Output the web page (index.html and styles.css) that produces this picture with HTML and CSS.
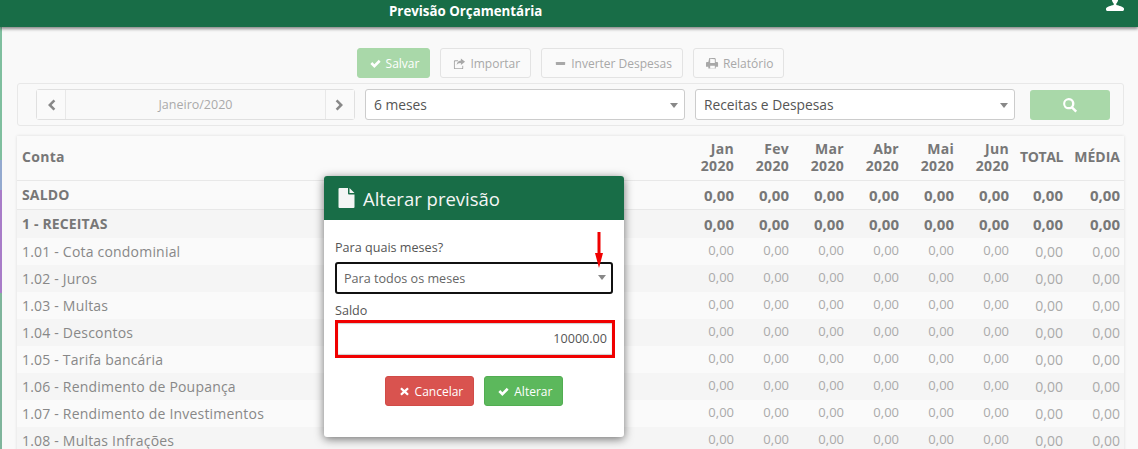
FILE: index.html
```html
<!DOCTYPE html>
<html lang="pt-BR">

<head>
    <meta charset="UTF-8">
    <title>Previsão Orçamentária</title>
    <link rel="stylesheet" href="styles.css">
</head>

<body>
    <div class="topbar">
        <span class="topbar-title">Previsão Orçamentária</span>
        <svg class="topbar-user" viewBox="0 0 20 14" width="20" height="14"><path d="M6.500 0h7c0 3-1 5.500-2.200 6.500v1.500c3 .8 6.700 1.500 7.700 3.500v1c0 .8-.7 1.500-1.500 1.500h-15c-.8 0-1.500-.7-1.500-1.500v-1c1-2 4.700-2.700 7.700-3.500v-1.500c-1.200-1-2.200-3.500-2.200-6.500z" fill="#fff"/></svg>
    </div>

    <div class="page">
        <div class="side-strip">
            <div class="strip-green"></div>
            <div class="strip-blue"></div>
            <div class="strip-purple"></div>
            <div class="strip-green2"></div>
        </div>

        <div class="content">
            <div class="actions">
                <button class="btn btn-save">
                    <svg class="ico" viewBox="0 0 14 14"><path d="M1.500 7.500l2-2 2.300 2.300 4.700-4.800 2 2-6.700 6.800z" fill="currentColor"/></svg>
                    Salvar
                </button>
                <button class="btn">
                    <svg class="ico" viewBox="0 0 14 14"><path d="M8.500 1.500l4.500 3.500-4.500 3.500v-2c-2.500 0-4 .7-4.500 2.500 0-3 1.500-5 4.500-5.300zM2.500 3.500h3v1h-3a.5.5 0 0 0-.5.5v6.500a.5.5 0 0 0 .5.5h7a.5.5 0 0 0 .5-.5v-2h1v2.500a1 1 0 0 1-1 1h-8a1 1 0 0 1-1-1v-7.500a1 1 0 0 1 1-1z" fill="currentColor"/></svg>
                    Importar
                </button>
                <button class="btn">
                    <svg class="ico" viewBox="0 0 14 14"><rect x="2" y="5.500" width="10" height="3" rx=".5" fill="currentColor"/></svg>
                    Inverter Despesas
                </button>
                <button class="btn">
                    <svg class="ico" viewBox="0 0 14 14"><path d="M3.500 1h6l1 1v3.500h1.500a1 1 0 0 1 1 1v4h-2.500v2h-8v-2h-2.500v-4a1 1 0 0 1 1-1h1.500zM4.500 2v4.500h5v-4zM4.500 9.500v2.500h5v-2.500z" fill="currentColor" fill-rule="evenodd"/></svg>
                    Relatório
                </button>
            </div>

            <div class="filters">
                <div class="month-picker">
                    <button class="month-arrow">
                        <svg viewBox="0 0 10 14" width="10" height="14"><path d="M7.500 1.500l1.800 1.800-3.700 3.700 3.700 3.700-1.800 1.800-5.500-5.500z" fill="currentColor"/></svg>
                    </button>
                    <div class="month-value">Janeiro/2020</div>
                    <button class="month-arrow">
                        <svg viewBox="0 0 10 14" width="10" height="14"><path d="M2.500 1.500l-1.800 1.800 3.700 3.700-3.700 3.700 1.800 1.800 5.500-5.500z" fill="currentColor"/></svg>
                    </button>
                </div>
                <div class="select">6 meses<span class="caret"></span></div>
                <div class="select">Receitas e Despesas<span class="caret"></span></div>
                <button class="btn-search">
                    <svg viewBox="0 0 14 14" width="16" height="16"><path d="M5.800 0.800a5 5 0 0 1 4.100 7.900l3.300 3.300-1.500 1.500-3.300-3.300a5 5 0 1 1-2.600-9.400zM5.800 2.800a3 3 0 1 0 0 6 3 3 0 0 0 0-6z" fill="currentColor" fill-rule="evenodd"/></svg>
                </button>
            </div>

            <table class="grid">
                <colgroup>
                    <col>
                    <col class="col-m"><col class="col-m"><col class="col-m"><col class="col-m"><col class="col-m"><col class="col-m">
                    <col class="col-t"><col class="col-a">
                </colgroup>
                <thead>
                    <tr>
                        <th class="conta">Conta</th>
                        <th>Jan<br>2020</th>
                        <th>Fev<br>2020</th>
                        <th>Mar<br>2020</th>
                        <th>Abr<br>2020</th>
                        <th>Mai<br>2020</th>
                        <th>Jun<br>2020</th>
                        <th class="th-total">TOTAL</th>
                        <th class="th-media">MÉDIA</th>
                    </tr>
                </thead>
                <tbody id="rows"></tbody>
            </table>
        </div>
    </div>

    <div class="modal">
        <div class="modal-head">
            <svg viewBox="0 0 16 20" width="17" height="20"><path d="M1 0h8.500v5.500a1 1 0 0 0 1 1h5.500v12.500a1 1 0 0 1-1 1h-14a1 1 0 0 1-1-1v-18a1 1 0 0 1 1-1zM11 0l5 5h-5z" fill="#f4f6f5"/></svg>
            <span>Alterar previsão</span>
        </div>
        <div class="modal-body">
            <label class="field-label">Para quais meses?</label>
            <div class="modal-select">Para todos os meses<span class="caret"></span></div>
            <label class="field-label saldo-label">Saldo</label>
            <div class="modal-input">10000.00</div>
            <div class="modal-btns">
                <button class="btn-cancel">
                    <svg class="ico-x" viewBox="0 0 14 14"><path d="M3.500 1.800l3.500 3.200 3.500-3.200 2 2-3.300 3.200 3.300 3.200-2 2-3.500-3.200-3.500 3.200-2-2 3.300-3.200-3.300-3.200z" fill="currentColor"/></svg>
                    Cancelar
                </button>
                <button class="btn-ok">
                    <svg class="ico" viewBox="0 0 14 14"><path d="M1.500 7.500l2-2 2.300 2.300 4.700-4.800 2 2-6.700 6.800z" fill="currentColor"/></svg>
                    Alterar
                </button>
            </div>
        </div>
        <svg class="red-arrow" viewBox="0 0 8 36" width="8" height="36"><path d="M2.500 0h3v21h2.500l-4 15-4-15h2.500z" fill="#f00000"/></svg>
    </div>

    <script>
        // linhas da tabela
        let contas = [
            ['SALDO', 'total'],
            ['1 - RECEITAS', 'total'],
            ['1.01 - Cota condominial', ''],
            ['1.02 - Juros', ''],
            ['1.03 - Multas', ''],
            ['1.04 - Descontos', ''],
            ['1.05 - Tarifa bancária', ''],
            ['1.06 - Rendimento de Poupança', ''],
            ['1.07 - Rendimento de Investimentos', ''],
            ['1.08 - Multas Infrações', ''],
        ];

        let rows = document.querySelector('#rows');
        contas.forEach(conta => {
            let tds = '';
            for (let i = 0; i < 6; i++) {
                tds += '<td><span>0,00</span></td>';
            }
            tds += '<td class="sum"><span>0,00</span></td><td class="sum"><span>0,00</span></td>';
            rows.innerHTML += `<tr class="${conta[1]}"><td class="conta">${conta[0]}</td>${tds}</tr>`;
        });
    </script>
</body>

</html>
```

FILE: styles.css
```css
* {
    box-sizing: border-box;
}

html,
body {
    height: 100%;
}

body {
    margin: 0;
    overflow: hidden;
    background-color: #f9f9f9;
    font-family: "Open Sans", "Liberation Sans", sans-serif;
    font-size: 14px;
    color: #555;
}

button {
    font-family: inherit;
}

.topbar {
    height: 27px;
    background-color: #186d47;
    box-shadow: 0 2px 3px rgba(0, 0, 0, 0.45);
    display: flex;
    align-items: flex-start;
    justify-content: space-between;
    padding: 2px 13px 0 389px;
    position: relative;
}

.topbar-title {
    color: #fff;
    font-size: 13.300px;
    font-weight: 700;
}

.topbar-user {
    margin-top: -5px;
}

.page {
    display: flex;
    height: 422px;
}

.side-strip {
    width: 2px;
    flex-shrink: 0;
    display: flex;
    flex-direction: column;
}

.strip-green {
    height: 133px;
    background-color: #7fbf9f;
}

.strip-blue {
    height: 30px;
    background-color: #93a9cf;
}

.strip-purple {
    height: 103px;
    background-color: #a87cc8;
}

.strip-green2 {
    flex: 1;
    background-color: #7fb59c;
}

.content {
    flex: 1;
    padding: 21px 14px 0 15px;
}

.actions {
    display: flex;
    justify-content: center;
    gap: 10px;
    height: 30px;
}

.btn {
    height: 30px;
    padding: 0 10px 0 12px;
    border: 1px solid #e3e3e3;
    border-radius: 3px;
    background-color: #fafafa;
    color: #a8a8a8;
    font-size: 12px;
    display: flex;
    align-items: center;
    gap: 4px;
}

.btn-save {
    padding-left: 11px;
    background-color: #a9d8a9;
    border-color: #a9d8a9;
    color: #fff;
}

.ico {
    width: 13px;
    height: 13px;
}

.ico-x {
    width: 11px;
    height: 11px;
}

.filters {
    margin-top: 5px;
    height: 43px;
    border: 1px solid #e8e8e8;
    border-radius: 3px;
    display: flex;
    align-items: center;
    padding: 0 13px 0 18px;
    gap: 10px;
}

.month-picker {
    width: 319px;
    height: 31px;
    display: flex;
    border: 1px solid #e0e0e0;
    border-radius: 3px;
}

.month-arrow {
    width: 28px;
    border: none;
    background-color: #fafafa;
    color: #888;
    padding: 0;
    display: flex;
    align-items: center;
    justify-content: center;
}

.month-value {
    flex: 1;
    border-left: 1px solid #e8e8e8;
    border-right: 1px solid #e8e8e8;
    text-align: center;
    line-height: 30px;
    color: #aaa;
    font-size: 12.500px;
}

.select {
    width: 320px;
    height: 31px;
    background-color: #fff;
    border: 1px solid #ccc;
    border-radius: 3px;
    padding-left: 8px;
    line-height: 30px;
    font-size: 13.800px;
    color: #555;
    position: relative;
}

.caret {
    position: absolute;
    right: 6px;
    top: 13px;
    width: 0;
    height: 0;
    border-left: 4px solid transparent;
    border-right: 4px solid transparent;
    border-top: 5px solid #888;
}

.btn-search {
    width: 80px;
    height: 30px;
    margin-left: 5px;
    background-color: #a9d8a9;
    border: none;
    border-radius: 3px;
    color: #fff;
    display: flex;
    align-items: center;
    justify-content: center;
}

.grid {
    margin-top: 10px;
    width: 1107px;
    table-layout: fixed;
    border-collapse: collapse;
    background-color: #fafafa;
    box-shadow: 0 0 3px rgba(0, 0, 0, 0.12);
}

.col-m {
    width: 55px;
}

.col-t {
    width: 54px;
}

.col-a {
    width: 57px;
}

.grid th {
    height: 44px;
    padding: 0 4px 2px 0;
    text-align: right;
    font-size: 14px;
    line-height: 17px;
    font-weight: 700;
    color: #777;
    letter-spacing: 0.3px;
    border-bottom: 1px solid #e8e8e8;
}

.grid th.th-total {
    letter-spacing: -0.4px;
}

.grid th.th-media {
    letter-spacing: 0;
}

.grid th.conta,
.grid td.conta {
    text-align: left;
    padding-left: 5px;
}

.grid td {
    height: 27px;
    padding: 0 4px 0 0;
    text-align: right;
    font-size: 13px;
    color: #aaa;
    white-space: nowrap;
}

.grid td span {
    position: relative;
    top: -2px;
}

.grid td.sum {
    font-size: 14px;
}

.grid td.sum span {
    top: 0;
}

.grid td.conta {
    font-size: 14px;
    color: #888;
    letter-spacing: 0.2px;
}

.grid tbody tr:nth-child(even) {
    background-color: #f5f5f5;
}

.grid tr.total td {
    height: 29px;
    font-size: 15px;
    font-weight: 700;
    color: #777;
    border-bottom: 1px solid #e8e8e8;
}

.grid tr.total td.conta {
    font-size: 14px;
    letter-spacing: 0.15px;
}

.grid tr.total td span {
    top: 0;
}

.grid tr.total + tr.total td {
    border-bottom: none;
}

.modal {
    position: absolute;
    left: 324px;
    top: 176px;
    width: 300px;
    height: 261px;
    background-color: #fff;
    border-radius: 3px;
    box-shadow: 0 2px 10px rgba(0, 0, 0, 0.55);
}

.modal-head {
    height: 44px;
    background-color: #186d47;
    border-radius: 3px 3px 0 0;
    display: flex;
    align-items: center;
    gap: 8px;
    padding-left: 14px;
    color: #f4f6f5;
    font-size: 18.500px;
}

.modal-body {
    padding: 19px 11px 0 11px;
}

.field-label {
    display: block;
    color: #555;
    font-size: 12.600px;
    line-height: 18px;
}

.modal-select {
    margin-top: 5px;
    height: 32px;
    border: 2px solid #111;
    border-radius: 3px;
    padding-left: 7px;
    line-height: 29px;
    font-size: 12.600px;
    color: #666;
    position: relative;
}

.modal-select .caret {
    right: 5px;
    top: 11px;
}

.saldo-label {
    margin-top: 8px;
}

.modal-input {
    margin-top: 0;
    width: 280px;
    height: 38px;
    border: 3px solid #f00000;
    box-shadow: inset 0 1px 1px #ccc, inset 0 -1px 1px #ccc;
    padding-right: 5px;
    text-align: right;
    line-height: 32px;
    font-size: 12.600px;
    color: #555;
}

.modal-btns {
    margin-top: 18px;
    display: flex;
    justify-content: center;
    gap: 10px;
}

.btn-cancel,
.btn-ok {
    height: 30px;
    border-radius: 3px;
    color: #fff;
    font-size: 12px;
    display: flex;
    align-items: center;
}

.btn-cancel {
    background-color: #d9534f;
    border: 1px solid #d14b47;
    padding: 0 10px 0 13px;
    gap: 5px;
}

.btn-ok {
    background-color: #5cb85c;
    border: 1px solid #52ad52;
    padding: 0 10px 0 12px;
    gap: 4px;
}

.red-arrow {
    position: absolute;
    left: 271px;
    top: 56px;
}
```
